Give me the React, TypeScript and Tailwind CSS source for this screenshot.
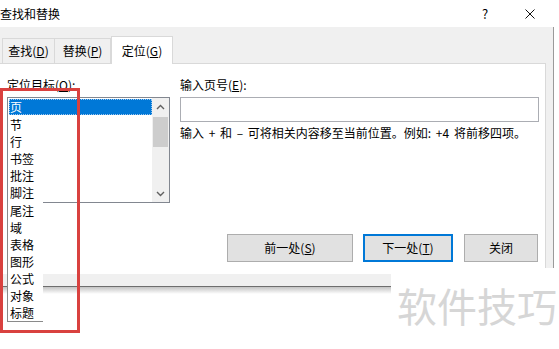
import React from "react";

const rows1 = ["页", "节", "行", "书签", "批注", "脚注"];
const rows2 = ["尾注", "域", "表格", "图形", "公式", "对象", "标题"];

function Chevron({ up }: { up?: boolean }) {
  return (
    <svg width="9" height="6" viewBox="0 0 9 6">
      <path
        d={up ? "M1 5 L4.5 1.5 L8 5" : "M1 1 L4.5 4.5 L8 1"}
        fill="none"
        stroke="#606060"
        strokeWidth="1.4"
      />
    </svg>
  );
}

export default function App() {
  return (
    <div className="relative w-[559px] h-[349px] overflow-hidden bg-white text-[12px] text-black font-['Noto_Sans_CJK_SC','Noto_Sans',sans-serif]">
      {/* title bar */}
      <div className="h-[27px] flex items-center pr-[24px]">
        <span className="leading-none">查找和替换</span>
        <div className="ml-auto flex items-center">
          <span className="w-[10px] text-center leading-none text-[13px]">?</span>
          <div className="w-[35px]" />
          <svg width="10" height="10" viewBox="0 0 10 10">
            <path d="M0.5 0.5 L9.5 9.5 M9.5 0.5 L0.5 9.5" stroke="#111" strokeWidth="1" />
          </svg>
        </div>
      </div>

      {/* dialog body */}
      <div className="w-[554px] bg-[#f0f0f0] border-r border-[#9a9a9a]">
        {/* tabs */}
        <div className="h-[36px] flex items-end pl-[2px]">
          <div className="w-[53px] h-[25px] border border-b-0 border-[#d9d9d9] flex items-center justify-center leading-none">
            查找(<u>D</u>)
          </div>
          <div className="w-[56px] h-[25px] border border-l-0 border-b-0 border-[#d9d9d9] flex items-center justify-center leading-none">
            替换(<u>P</u>)
          </div>
          <div className="relative z-10 -mb-px w-[62px] h-[28px] bg-white border border-b-0 border-[#d9d9d9] flex items-center justify-center leading-none">
            定位(<u>G</u>)
          </div>
        </div>

        {/* panel */}
        <div className="w-[546px] h-[211px] bg-white border-t border-r border-[#d9d9d9] flex flex-col pt-[13px] pb-[12px]">
          <div className="flex pl-[7px]">
            {/* left column */}
            <div className="w-[163px] flex flex-col">
              <div className="h-[16px] leading-[16px]">
                定位目标(<u>O</u>):
              </div>
              <div className="mt-[4px] w-[163px] h-[106px] border border-[#828790] flex bg-white">
                <div className="flex-1 pt-px pl-px">
                  {rows1.map((r, i) => (
                    <div
                      key={r}
                      className={
                        i === 0
                          ? "h-[16px] mb-px leading-[16px] pl-px bg-[#0078d7] text-white outline-1 outline-dotted outline-[#9cc6ee] -outline-offset-1"
                          : "h-[17px] leading-[17px] pl-px"
                      }
                    >
                      {r}
                    </div>
                  ))}
                </div>
                <div className="w-[17px] bg-[#f0f0f0] flex flex-col">
                  <div className="h-[17px] flex items-center justify-center">
                    <Chevron up />
                  </div>
                  <div className="mt-[2px] mx-[1px] h-[30px] bg-[#cdcdcd]" />
                  <div className="flex-1" />
                  <div className="h-[17px] flex items-center justify-center">
                    <Chevron />
                  </div>
                </div>
              </div>
            </div>

            {/* right column */}
            <div className="ml-[10px] w-[359px] flex flex-col">
              <div className="h-[16px] leading-[16px]">
                输入页号(<u>E</u>):
              </div>
              <div className="mt-[4px] h-[25px] border border-[#abadb3] bg-white" />
              <div className="mt-[3px] h-[16px] leading-[16px] whitespace-nowrap [word-spacing:2px]">
                输入 + 和 – 可将相关内容移至当前位置。例如: +4 将前移四项。
              </div>
            </div>
          </div>

          {/* buttons */}
          <div className="mt-auto flex justify-end pr-[7px]">
            <button className="w-[126px] h-[28px] bg-[#e1e1e1] border border-[#adadad] leading-none">
              前一处(<u>S</u>)
            </button>
            <button className="ml-[10px] w-[90px] h-[28px] bg-[#e1e1e1] border-2 border-[#0078d7] leading-none">
              下一处(<u>T</u>)
            </button>
            <button className="ml-[11px] w-[74px] h-[28px] bg-[#e1e1e1] border border-[#adadad] leading-none">
              关闭
            </button>
          </div>
        </div>

        {/* bottom gray band */}
        <div className="h-[12px]" />
      </div>
      <div className="w-[554px] h-px bg-[#6e6e6e]" />
      <div className="w-[554px] h-[7px] bg-gradient-to-b from-[#c4c4c4] to-white" />

      {/* list overflow */}
      <div className="absolute left-[7px] top-[202px] w-[36px] bg-white border-l border-b border-[#8a8a8a]">
        {rows2.map((r) => (
          <div key={r} className="h-[17px] leading-[17px] pl-[2px] whitespace-nowrap">
            {r}
          </div>
        ))}
      </div>

      {/* watermark */}
      <div className="absolute left-[391px] top-[268px] right-0 bottom-0 bg-white pl-[6px] pt-[17px]">
        <span className="text-[40px] leading-none text-[#d6d6d6] whitespace-nowrap">软件技巧</span>
      </div>

      {/* red highlight */}
      <div className="absolute left-0 top-[88px] w-[80px] h-[245px] border-[3px] border-[#d9413f]" />
    </div>
  );
}
